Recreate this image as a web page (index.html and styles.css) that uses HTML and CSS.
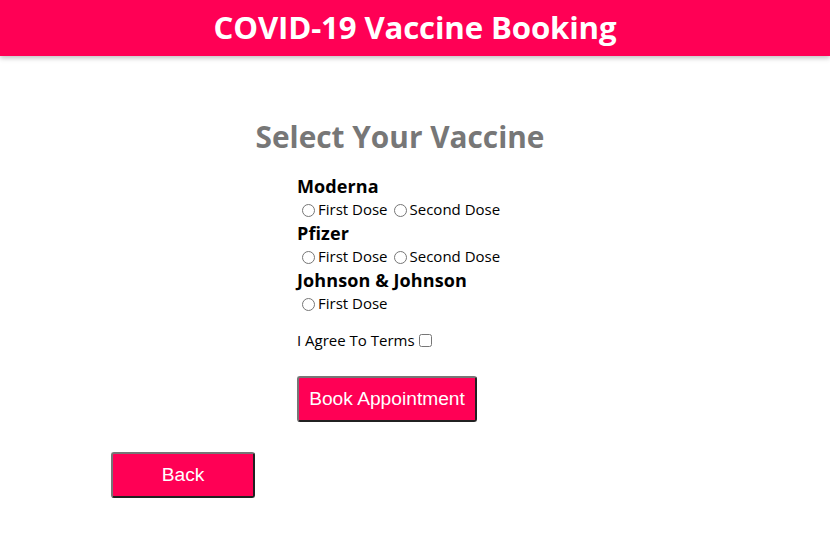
FILE: index.html
```html
<!DOCTYPE html>
<html>
<head>
<meta charset="utf-8">
<link rel="stylesheet" href="styles.css">
</head>
<body>
<header class="topbar"><h1 class="title">COVID-19 Vaccine Booking</h1></header>
<main class="page">
  <h2 class="heading">Select Your Vaccine</h2>
  <form class="form">
    <div class="vaccine">
      <div class="vname">Moderna</div>
      <div class="doses">
        <label class="dose"><input type="radio" name="v">First Dose</label>
        <label class="dose"><input type="radio" name="v">Second Dose</label>
      </div>
    </div>
    <div class="vaccine">
      <div class="vname">Pfizer</div>
      <div class="doses">
        <label class="dose"><input type="radio" name="v">First Dose</label>
        <label class="dose"><input type="radio" name="v">Second Dose</label>
      </div>
    </div>
    <div class="vaccine">
      <div class="vname">Johnson &amp; Johnson</div>
      <div class="doses">
        <label class="dose"><input type="radio" name="v">First Dose</label>
      </div>
    </div>
    <label class="terms">I Agree To Terms <input type="checkbox" class="check"></label>
    <button type="button" class="btn book">Book Appointment</button>
  </form>
  <button type="button" class="btn back">Back</button>
</main>
</body>
</html>
```
FILE: styles.css
```css
html, body { margin: 0; padding: 0; background: #fff; }
body { font-family: "Open Sans", "Noto Sans", sans-serif; color: #000; }
.topbar {
  background: #ff0055;
  height: 56px;
  display: flex;
  align-items: center;
  justify-content: center;
  box-shadow: 0 2px 5px rgba(0,0,0,0.25);
}
.title {
  margin: 0;
  color: #fff;
  font-size: 31.2px;
  font-weight: 700;
  letter-spacing: -0.15px;
  line-height: 1;
}
.page { padding: 0; }
.heading {
  margin: 62px 0 0 0;
  text-align: center;
  color: #777;
  font-size: 29.8px;
  font-weight: 700;
  line-height: 38px;
  padding-right: 30px;
}
.form {
  margin: 18px 0 0 297px;
  display: flex;
  flex-direction: column;
  align-items: flex-start;
}
.vaccine { display: flex; flex-direction: column; }
.vname { font-size: 18px; font-weight: 700; line-height: 24px; letter-spacing: 0.1px; }
.doses { display: flex; line-height: 23px; font-size: 15px; }
.dose { display: flex; align-items: center; margin-right: 1px; }
.dose input { margin: 1px 3px 0 5px; width: 13px; height: 13px; }
.terms { margin-top: 15px; font-size: 15px; line-height: 20px; display: flex; align-items: center; }
.check { margin: 0 0 0 4px; width: 13px; height: 13px; }
.btn {
  background: #ff0055;
  color: #fff;
  font-family: "Liberation Sans", Arial, sans-serif;
  font-size: 19.2px;
  border: 2px outset #767676;
  border-radius: 3px;
  height: 46px;
  cursor: pointer;
}
.book { margin-top: 26px; width: 180px; }
.back { margin: 30px 0 0 111px; width: 144px; display: block; }
```
